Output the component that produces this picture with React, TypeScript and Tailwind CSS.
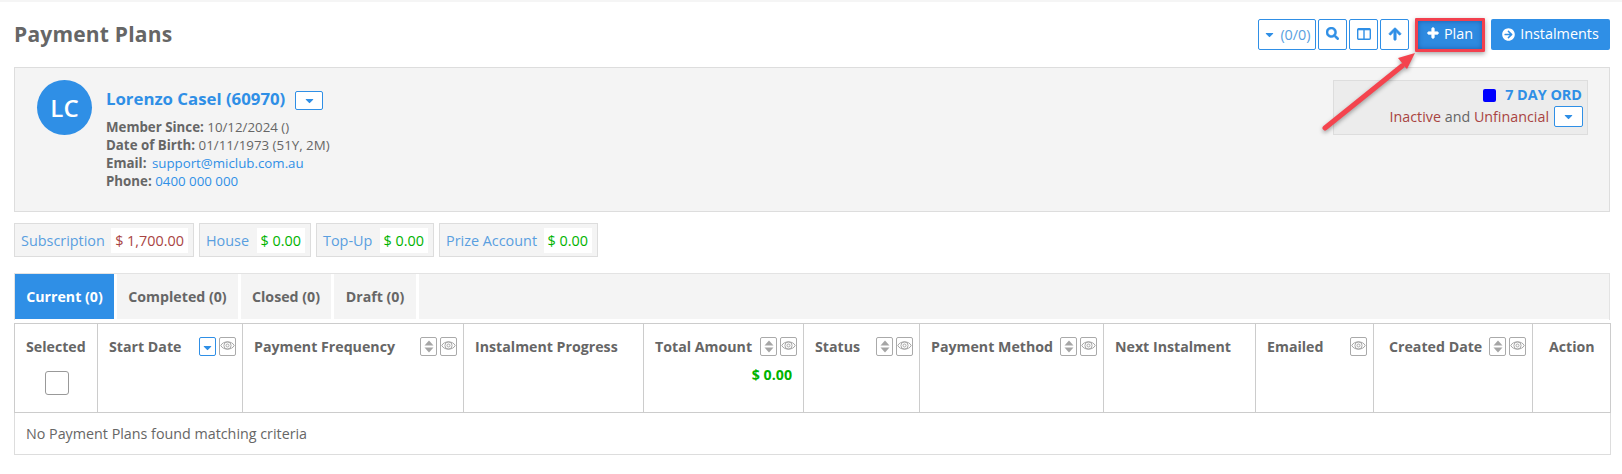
import React from "react";
import { FaCaretDown, FaSearch, FaArrowUp, FaPlus, FaArrowCircleRight } from "react-icons/fa";

const Eye = () => (
  <svg width="15" height="13" viewBox="0 0 15 13" fill="none" stroke="#a8a8a8" strokeWidth="1">
    <path d="M0.8 6.5 C3 1.6 12 1.6 14.2 6.5 C12 11.4 3 11.4 0.8 6.5 Z" />
    <circle cx="7.5" cy="6.5" r="3.6" />
    <circle cx="7.5" cy="6.5" r="1.5" />
  </svg>
);

const EyeBtn = () => (
  <span className="flex h-[19px] w-[17px] items-start justify-center rounded-[2px] border border-[#aaaaaa] bg-white pt-[1px]">
    <Eye />
  </span>
);

const SortBtn = () => (
  <span className="flex h-[19px] w-[17px] items-center justify-center rounded-[2px] border border-[#aaaaaa] bg-white">
    <svg width="10" height="13" viewBox="0 0 10 13" fill="#a5a5a5">
      <path d="M5 0.5 L9.5 5.5 H0.5 Z" />
      <path d="M5 12.5 L9.5 7.5 H0.5 Z" />
    </svg>
  </span>
);

const ActiveSort = () => (
  <span className="flex h-[19px] w-[17px] items-end justify-center rounded-[2px] border border-[#2f8fe6] bg-white pb-[1px] text-[13px] text-[#2f8fe6]">
    <FaCaretDown />
  </span>
);

const columns = [
  { label: "Selected", w: "w-[83px]", kind: "check", pad: "pl-[11px] pr-[6px]" },
  { label: "Start Date", w: "w-[145px]", kind: "active", pad: "pl-[11px] pr-[6px]" },
  { label: "Payment Frequency", w: "w-[221px]", kind: "both", pad: "pl-[11px] pr-[6px]" },
  { label: "Instalment Progress", w: "w-[180px]", kind: "none", pad: "pl-[11px] pr-[6px]" },
  { label: "Total Amount", w: "w-[160px]", kind: "total", pad: "pl-[11px] pr-[6px]" },
  { label: "Status", w: "w-[116px]", kind: "both", pad: "pl-[11px] pr-[6px]" },
  { label: "Payment Method", w: "w-[184px]", kind: "both", pad: "pl-[11px] pr-[6px]" },
  { label: "Next Instalment", w: "w-[152px]", kind: "none", pad: "pl-[11px] pr-[6px]" },
  { label: "Emailed", w: "w-[118px]", kind: "eye", pad: "pl-[11px] pr-[6px]" },
  { label: "Created Date", w: "w-[159px]", kind: "both", pad: "pl-[15px] pr-[6px]" },
  { label: "Action", w: "w-[78px]", kind: "none", pad: "pl-[16px] pr-[6px]" },
];

const chips = [
  { label: "Subscription", value: "$ 1,700.00", color: "text-[#a94442]", w: "w-[180px]" },
  { label: "House", value: "$ 0.00", color: "text-[#00b300]", w: "w-[112px]" },
  { label: "Top-Up", value: "$ 0.00", color: "text-[#00b300]", w: "w-[118px]" },
  { label: "Prize Account", value: "$ 0.00", color: "text-[#00b300]", w: "w-[159px]" },
];

const tabs = [
  { label: "Current (0)", w: "w-[99px]", active: true },
  { label: "Completed (0)", w: "w-[121px]" },
  { label: "Closed (0)", w: "w-[90px]" },
  { label: "Draft (0)", w: "w-[82px]" },
];

const outlineBtn = "flex h-[31px] items-center justify-center rounded-[2px] border border-[#2f8fe6] bg-white text-[#2f8fe6]";

export default function App() {
  return (
    <div className="relative h-[474px] overflow-hidden border-t-2 border-[#f5f5f5] bg-white font-['Open_Sans',sans-serif] text-[14.4px] text-[#666666]">
      <header className="flex h-[65px] items-center justify-between pl-[14px] pr-3">
        <h1 className="text-[21px] font-bold tracking-[0.2px] text-[#666666]">Payment Plans</h1>
        <div className="flex items-center">
          <button className={`${outlineBtn} mr-[2px] w-[58px] gap-[4px] text-[14.4px]`}>
            <FaCaretDown className="text-[13px]" />
            <span className="text-[#5a9fe0]">(0/0)</span>
          </button>
          <button className={`${outlineBtn} mr-[2px] w-[29px] pb-[3px] text-[13px]`}>
            <FaSearch className="stroke-[20px]" />
          </button>
          <button className={`${outlineBtn} mr-[2px] w-[29px] pb-[1px]`}>
            <svg width="14" height="12" viewBox="0 0 14 12" fill="none" stroke="#2f8fe6" strokeWidth="1.4">
              <rect x="0.7" y="0.7" width="12.6" height="10.6" rx="1" />
              <path d="M7 1v10" />
              <path d="M1 1.3h12" strokeWidth="2" />
            </svg>
          </button>
          <button className={`${outlineBtn} mr-[6px] w-[29px] pb-[1px] text-[14px]`}>
            <FaArrowUp className="stroke-[30px]" />
          </button>
          <div className="mr-[6px] rounded-[1px] border-[3px] border-[#f2404e] shadow-[0_2px_5px_rgba(0,0,0,0.35)]">
            <button className="flex h-[28px] w-[64px] items-center justify-center gap-[5px] bg-[#2e8ae0] pb-[2px] text-[14.4px] text-white shadow-[inset_0_0_5px_rgba(0,40,110,0.45)]">
              <FaPlus className="mb-[2px] stroke-[40px] text-[12px]" />
              Plan
            </button>
          </div>
          <button className="flex h-[31px] w-[119px] items-center justify-center gap-[5px] rounded-[2px] bg-[#2f8fe6] pb-[1px] text-[14.4px] text-white">
            <FaArrowCircleRight className="text-[13px]" />
            Instalments
          </button>
        </div>
      </header>

      <section className="ml-[14px] mr-3 flex h-[145px] justify-between border border-[#dddddd] bg-[#f4f4f4] pl-[22px] pr-[21px] pt-3">
        <div className="flex">
          <div className="flex h-[55px] w-[55px] items-center justify-center rounded-full bg-[#2f8fe6] text-[24px] font-semibold text-white">
            LC
          </div>
          <div className="ml-[14px] pt-[7px]">
            <div className="flex h-[24px] items-center">
              <span className="text-[16.8px] font-bold text-[#2f8fe6]">Lorenzo Casel (60970)</span>
              <button className="ml-[10px] mt-[3px] flex h-[19px] w-[28px] items-center justify-center rounded-[2px] border border-[#2f8fe6] bg-white text-[13px] text-[#2f8fe6]">
                <FaCaretDown />
              </button>
            </div>
            <div className="mt-[7px] text-[13.3px] leading-[18px]">
              <div><b>Member Since:</b> 10/12/2024 ()</div>
              <div><b>Date of Birth:</b> 01/11/1973 (51Y, 2M)</div>
              <div><b>Email:</b> <span className="ml-[2px] text-[#2f8fe6]">support@miclub.com.au</span></div>
              <div><b>Phone:</b> <span className="text-[#2f8fe6]">0400 000 000</span></div>
            </div>
          </div>
        </div>
        <div className="flex h-[55px] w-[255px] flex-col items-end border border-[#dddddd] bg-[#ececec] pr-[4px] pt-[4px]">
          <div className="flex h-[20px] items-center pr-[1px]">
            <span className="mr-[9px] h-[13px] w-[13px] rounded-[2px] bg-[#0000ff]" />
            <span className="text-[14.4px] font-bold text-[#2f8fe6]">7 DAY ORD</span>
          </div>
          <div className="mt-[1px] flex items-center">
            <span className="text-[14.3px]">
              <span className="text-[#a94442]">Inactive</span> and <span className="text-[#a94442]">Unfinancial</span>
            </span>
            <button className="ml-[5px] flex h-[21px] w-[29px] items-center justify-center rounded-[2px] border border-[#2f8fe6] bg-white text-[13px] text-[#2f8fe6]">
              <FaCaretDown />
            </button>
          </div>
        </div>
      </section>

      <div className="ml-[14px] mt-[11px] flex gap-[5px]">
        {chips.map((c) => (
          <div key={c.label} className={`flex h-[34px] items-center justify-between border border-[#dddddd] bg-[#f4f4f4] pl-[6px] pr-[5px] pt-[1px] text-[14.4px] ${c.w}`}>
            <span className="text-[#5a9fe0]">{c.label}</span>
            <span className={`flex h-[25px] items-center bg-white px-[4px] ${c.color}`}>{c.value}</span>
          </div>
        ))}
      </div>

      <div className="ml-[14px] mr-3 mt-[16px] flex h-[47px] gap-[3px] border border-b-0 border-[#e3e3e3] pb-[1px]">
        {tabs.map((t) => (
          <div
            key={t.label}
            className={`flex items-center justify-center text-[14.2px] font-bold ${t.w} ${t.active ? "bg-[#2f8fe6] text-white" : "bg-[#f4f4f4] text-[#666666]"}`}
          >
            {t.label}
          </div>
        ))}
        <div className="flex-1 bg-[#f4f4f4]" />
      </div>

      <table className="ml-[14px] mt-[3px] w-[1596px] table-fixed border-collapse border border-[#dddddd]">
        <thead>
          <tr className="h-[89px] border border-[#cccccc]">
            {columns.map((c) => (
              <th key={c.label} className={`border border-[#cccccc] p-0 align-top ${c.w}`}>
                <div className={`flex h-[88px] flex-col pt-[13px] text-left ${c.pad}`}>
                  <div className="flex h-[19px] items-center justify-between">
                    <span className="text-[14.2px] font-bold leading-[19px] text-[#666666]">{c.label}</span>
                    {c.kind === "active" && (
                      <span className="flex gap-[3px]"><ActiveSort /><EyeBtn /></span>
                    )}
                    {(c.kind === "both" || c.kind === "total") && (
                      <span className="flex gap-[3px]"><SortBtn /><EyeBtn /></span>
                    )}
                    {c.kind === "eye" && <EyeBtn />}
                  </div>
                  {c.kind === "check" && (
                    <span className="ml-[19px] mt-[15px] h-[24px] w-[24px] rounded-[3px] border border-[#999999] bg-white" />
                  )}
                  {c.kind === "total" && (
                    <span className="mt-[8px] pr-[5px] text-right text-[14.2px] font-bold text-[#00b300]">$ 0.00</span>
                  )}
                </div>
              </th>
            ))}
          </tr>
        </thead>
        <tbody>
          <tr className="h-[42px]">
            <td colSpan={11} className="pl-[11px] text-[14.3px] text-[#666666]">
              No Payment Plans found matching criteria
            </td>
          </tr>
        </tbody>
      </table>

      <svg className="pointer-events-none absolute left-[1310px] top-[40px]" width="120" height="100" viewBox="0 0 120 100" fill="none">
        <g style={{ filter: "drop-shadow(0 2px 2px rgba(0,0,0,0.35))" }}>
          <path d="M15 86 L92 24" stroke="#f4444e" strokeWidth="5" strokeLinecap="round" />
          <path d="M105 11 L88 16 L92 21 L93 23 L97 27 Z" fill="#f4444e" />
        </g>
      </svg>
    </div>
  );
}
